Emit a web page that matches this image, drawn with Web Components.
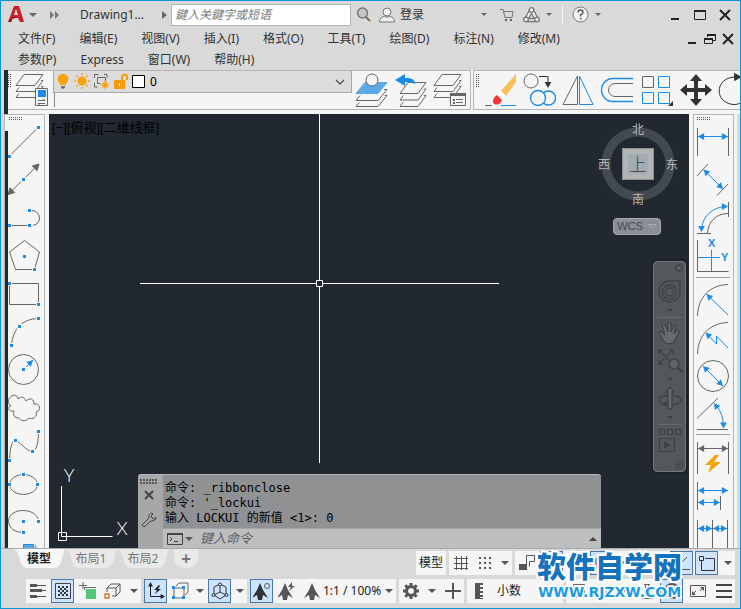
<!DOCTYPE html>
<html lang="zh-CN">
<head>
<meta charset="utf-8">
<title>Drawing1</title>
<style>
  html, body { height: 100%; margin: 0; }
  body {
    font: 12px/16px "Noto Sans", "Noto Sans CJK SC", sans-serif;
    color: #333;
    background: #d9d9d9;
  }
</style>
</head>
<body>
<cad-window></cad-window>

<script>
const G = '#666', B = '#1a8ce8', P = '#f5f5f5';
const sq = (x, y) => `<path fill="${P}" d="M${x-2} ${y-2}h5v5h-5z"/><path fill="${B}" d="M${x-1} ${y-1}h3v3h-3z"/>`;
const ln = (d, c = G, w = 1) => `<path d="${d}" fill="none" stroke="${c}" stroke-width="${w}"/>`;
const head = (x, y, a, c = B, n = 7) => {
  const p = (r, t) => `${(x + r * Math.cos(t)).toFixed(1)},${(y + r * Math.sin(t)).toFixed(1)}`;
  return `<polygon fill="${c}" points="${x},${y} ${p(n, a + Math.PI - .5)} ${p(n, a + Math.PI + .5)}"/>`;
};
const arrow = (x1, y1, x2, y2, c = B, both = true) => {
  const a = Math.atan2(y2 - y1, x2 - x1);
  return ln(`M${x1} ${y1}L${x2} ${y2}`, c) + head(x2, y2, a, c) + (both ? head(x1, y1, a + Math.PI, c) : '');
};
const sheet = (x, y, fill = P, w = 20, s = 9, h = 11) => {
  const pts = `${x+s},${y} ${x+s+w},${y} ${x+w},${y+h} ${x},${y+h}`;
  return `<polygon points="${pts}" fill="${P}" stroke="${P}" stroke-width="4"/><polygon points="${pts}" fill="${fill}" stroke="${fill === P ? G : fill}"/>`;
};
const person = (c) => `<path fill="${c}" d="M9 1l3 7 5 8-5-3-1 5h-4l-1-5-5 3 5-8z"/>`;
const checker = () => {
  let d = '';
  for (let r = 0; r < 5; r++) for (let c = 0; c < 5; c++) if ((r + c) % 2 === 0) d += `M${4 + c * 2} ${4 + r * 2}h2v2h-2z`;
  return `<path fill="#333" d="${d}"/>`;
};

const ICONS = {
  /* draw palette */
  line: [36, 38, ln('M1 33.500L30.500 4') + sq(1, 33) + sq(30, 4)],
  ray: [36, 38, arrow(0, 33.5, 31, 3, G).replaceAll('polygon', 'polygon stroke="#666"') + sq(15, 18)],
  polyline: [36, 38, ln('M1 26.500H21M21 11.500h3a7.500 7.500 0 0 1 0 15H21') + sq(1, 26) + '<path fill="#f5f5f5" d="M23 24h2v5h-2z"/>' + sq(21, 26) + sq(21, 11)],
  polygon: [36, 38, ln('M16.500 3.500L31.500 15 26.500 32.500H7.500L1.500 15z') + sq(16, 19) + sq(26, 32)],
  rect: [36, 38, ln('M1.500 8.500h29v21h-29z') + sq(1, 8) + sq(30, 29)],
  arc: [36, 38, ln('M3.500 32C5 16 14 6 30 5.500') + sq(3, 32) + sq(11, 13) + sq(30, 5)],
  circle: [36, 38, `<circle cx="15.500" cy="18.500" r="15" fill="none" stroke="${G}"/>` + arrow(15, 19, 25, 9, B, false) + sq(15, 18)],
  cloud: [36, 38, ln('M3 17C-1 15 0 8 4 7C7 5 10 7 10 10C13 7 17 8 18 12C22 8 26 10 26 15C32 14 34 21 28 23C30 28 24 31 21 29C17 34 12 31 11 29C6 29 5 26 6 22C0 23-1 17 3 17z')],
  spline: [36, 38, ln('M1.500 33C2 20 4 14 7 13.500C13 15 18 24 24 24.500C29 24 30.500 14 30.500 4') + sq(1, 33) + sq(7, 13) + sq(24, 24) + sq(30, 4)],
  ellipse: [36, 38, `<ellipse cx="15.500" cy="19.500" rx="14" ry="10" fill="none" stroke="${G}"/>` + sq(15, 9) + sq(1, 19) + sq(29, 19)],
  ellarc: [36, 38, ln('M30.500 18C29 4 1 4 .5 18C1 26 7 29 15 29.500') + sq(15, 18) + sq(30, 18) + sq(15, 29)],
  insert: [36, 38, `<path fill="#5aa9e6" stroke="${B}" d="M15.500 3.500h10v12h-10z"/><path fill="#5aa9e6" d="M27 3v12h6z"/>`],
  /* dimension palette */
  dlinear: [36, 38, ln('M1.500 5v28M32.500 5v28') + arrow(2, 13.5, 32, 13.5)],
  daligned: [36, 38, ln('M1 15L12 3M21 34.500L32 23') + arrow(7.5, 8.5, 27, 28)],
  darc: [36, 38, ln('M5.500 31C6 18 16 8 30 7.500', B) + head(5.5, 33, 1.57) + head(32, 7.5, 0) + ln('M11.500 34C12 23 20 14.500 32 14.500M32.500 3v15M1 34.500h14')],
  dord: [36, 38, ln('M1.500 3v31.500h31') + ln('M15.500 13v21M1 20.500h23', B) + `<g font-family="Liberation Sans, sans-serif" font-size="11" font-weight="700" fill="${B}"><text x="12" y="10">X</text><text x="25" y="24">Y</text></g>`],
  dradius: [36, 38, ln('M1.500 36C2 17 14 5 32 4.500') + arrow(32, 35, 10.5, 14, B, false)],
  djog: [36, 38, ln('M1.500 36C2 17 14 5 32 4.500') + ln('M32 30L20.500 18v8L11 16', B) + head(9.5, 14.5, -2.36)],
  ddiam: [36, 38, `<circle cx="17" cy="20" r="15.500" fill="none" stroke="${G}"/>` + arrow(7, 10, 27, 30)],
  dang: [36, 38, ln('M1 24.500L22 4M1 35.500h31') + ln('M20 11Q27 19 27.500 32', B) + head(18, 9, -2.2) + head(27.5, 34.5, 1.57)],
  dquick: [36, 38, ln('M1.500 5v32M32.500 5v32') + arrow(2, 11.500, 32, 11.500, G) + '<path fill="#f5a30a" d="M19 18l-10 10h6l-3 8 13-11h-7l5-7z"/>'],
  dbase: [36, 38, ln('M1.500 7v28M24.500 21v14') + arrow(2, 15.500, 32, 15.500) + arrow(2, 27.500, 24, 27.500)],
  dcont: [36, 38, ln('M1.500 7v28M16.500 7v28M31.500 7v28') + arrow(2, 15.500, 16, 15.500) + arrow(17, 15.500, 31, 15.500)],
  /* standard toolbars */
  layerprops: [37, 37, sheet(3, 14.5, P, 19, 8) + sheet(3, 8.500, P, 19, 8) + sheet(3, 2.500, P, 19, 8) + `<path fill="${P}" stroke="${G}" d="M22.500 16.500h12v17h-12z"/><path fill="${B}" d="M25 18h8v7h-8z"/>` + ln('M25 28.500h7l-2-2M32 31.500h-7l2 2')],
  layeriso: [37, 37, sheet(2, 23.5, P, 22) + sheet(2, 17.5, P, 22) + sheet(2, 10.5, '#5aa9e6', 22) + `<circle cx="18" cy="8" r="6" fill="${P}" stroke="${G}"/>`],
  layerprev: [37, 37, sheet(7, 23.5, P, 18, 8) + sheet(7, 17, P, 18, 8) + sheet(7, 10.5, P, 18, 8) + `<path fill="${B}" d="M2 8l10-6v4q10-1 10 6-3-2-10-2v4z"/>`],
  layerstate: [37, 37, sheet(2, 14.5, P, 19, 8) + sheet(2, 8.5, P, 19, 8) + sheet(2, 2.500, P, 19, 8) + `<path fill="${P}" stroke="${G}" d="M18.500 21.500h15v12h-15z"/><path fill="${G}" d="M18 21h16v3h-16zM21 27h2v2h-2zM21 30h2v2h-2z"/>` + ln('M24 27.500h7M24 30.500h7')],
  erase: [37, 37, `<path fill="#f8bf55" d="M18 19L33 2v8L23 24z"/><path fill="#fff" d="M14 23l4-4 5 5-4 4z"/><path fill="#f03a3a" d="M14 23l5 5q-2 6-8 4-3-5 3-9z"/>` + ln('M2 33.500h7') + ln('M18 33.500h15', B)],
  copy: [37, 37, `<g fill="none" stroke="${G}"><circle cx="9" cy="9" r="7"/></g><g fill="none" stroke="${B}" stroke-width="1.400"><circle cx="26.500" cy="26" r="7"/><circle fill="${P}" cx="16" cy="26" r="7.500"/></g>` + ln('M17 4.500h9v8', '#333') + head(26, 16, 1.57, '#333', 7)],
  mirror: [37, 37, ln('M16.500 4v28.500H2z') + ln('M18.500 4v28.500H32z', B)],
  offset: [37, 37, ln('M33 6.500H13a11 11 0 0 0 0 23H33', B, 1.4) + ln('M33 11.500H15a6 6 0 0 0 0 13H33')],
  array: [37, 37, ln('M3.500 4.500h11v11h-11z') + ln('M19.500 4.500h11v11h-11zM3.500 20.500h11v11h-11zM19.500 20.500h11v11h-11z', B) + '<path fill="#333" d="M34 29v5h-5z"/>'],
  move: [37, 37, '<path fill="#333" d="M18 2l6 7h-4v7h7v-4l7 6-7 6v-4h-7v7h4l-6 7-6-7h4v-7H9v4l-7-6 7-6v4h7V9h-4z"/>'],
  rotate: [37, 37, ln('M20 5C-2 4-4 30 16 32.500C24 33 30 28 31 18', '#333') + head(25, 5, 0, '#333', 9)],
  /* layer list */
  bulb: [16, 18, '<circle cx="8" cy="6" r="5.300" fill="#fba20b"/><path fill="#fba20b" d="M5 8h6v4H5z"/><path fill="#777" d="M6 13h4v2l-2 1-2-1z"/>'],
  sun: [16, 18, '<circle cx="8" cy="8" r="4.500" fill="#fba20b"/><g stroke="#fba20b" stroke-width="1.500"><path d="M8 0v2M8 14v2M0 8h2M14 8h2M2.500 2.500L4 4M12 12l1.500 1.500M2.500 13.500L4 12M12 4l1.500-1.500"/></g>'],
  vpfreeze: [17, 18, ln('M1.500 5v-3.500h4M11 1.500h3v3M1.500 10v4h3M4.500 4.500h8v4M4.500 4.500v6h3') + '<circle cx="12" cy="12" r="2.600" fill="#fba20b"/><path stroke="#fba20b" d="M12 7.500v9M7.500 12h9M9 9l6 6M15 9l-6 6"/>'],
  unlock: [16, 18, '<path fill="#f59c0b" d="M1 7h11v9H1z"/><path fill="none" stroke="#f59c0b" stroke-width="2" d="M9 8V4q0-2.500 2.500-2.500T14 4v3"/><path fill="#fff" d="M6 10h1v3H6z"/>'],
  swatch: [14, 18, '<path fill="#fff" stroke="#000" d="M.5 2.500h12v12h-12z"/>'],
  chev: [10, 8, ln('M1 2l4 4 4-4', '#555', 1.4)],
  /* title bar */
  logo: [16, 17, '<path fill="#c8202b" d="M6 0h5l5 16h-4l-2-4H5l-2 4H0z"/><path fill="#f7dcdc" d="M8 3l2 6H6z"/><path fill="#861018" d="M0 16l5-5h5L4 13l-1 3z"/>'],
  caret: [8, 6, '<path fill="#666" d="M0 1h8L4 5z"/>'],
  caretsm: [8, 6, '<path fill="#666" d="M1 1h6L4 4z"/>'],
  caretlg: [8, 6, '<path fill="#555" d="M0 1h8L4 5z"/>'],
  play: [5, 8, '<path fill="#666" d="M0 0v8l5-4z"/>'],
  play2: [10, 8, '<path fill="#777" d="M0 0v8l4-4zM5 0v8l4-4z"/>'],
  find: [16, 16, '<circle cx="6.500" cy="6" r="5" fill="#c6c6c6" stroke="#777" stroke-width="1.500"/><path d="M10 10l4 4" stroke="#8a6a45" stroke-width="2"/>'],
  user: [17, 16, '<g fill="#eee" stroke="#777"><circle cx="8" cy="5" r="4"/><path d="M.5 15q0-5 5-5.500 2.500 1.500 5 0 5 .5 5 5.500z"/></g>'],
  cart: [14, 14, ln('M0 1.500h3l2 8h7l1-6H4', '#777') + '<circle cx="6" cy="12" r="1.200" fill="#666"/><circle cx="11" cy="12" r="1.200" fill="#666"/>'],
  share: [17, 16, '<g fill="#f0f0f0" stroke="#777" stroke-width="1.300"><path d="M6 4L2 11.500 4.500 14.500h8L15 11.500 11 4z"/><path fill="#d9d9d9" d="M8.500 6.500l3 5h-6z"/><circle cx="8.500" cy="3" r="2.300"/><circle cx="3" cy="12.500" r="2.300"/><circle cx="14" cy="12.500" r="2.300"/></g>'],
  help: [17, 17, '<circle cx="8.500" cy="8.500" r="7.500" fill="#f2f2f2" stroke="#777"/><path d="M6 6.500q0-2.500 2.500-2.500T11 6.500Q11 8 8.500 9v1.500" fill="none" stroke="#555" stroke-width="1.400"/><path fill="#555" d="M8 12h1.500v1.500H8z"/>'],
  wmin: [12, 12, '<path fill="#222" d="M2 9h8v2H2z"/>'],
  wmax: [12, 12, '<path fill="none" stroke="#222" d="M.5 1.500h11v9H.5z"/><path fill="#222" d="M0 1h12v2H0z"/>'],
  wrest: [12, 12, '<path fill="none" stroke="#222" d="M3.500 4V1.500h8v6H9M.5 5.500h8v5H.5z"/><path fill="#222" d="M3 1h9v2H3zM0 5h9v2H0z"/>'],
  wclose: [12, 12, ln('M1 1l10 10M11 1L1 11', '#222', 2)],
  /* status bar */
  st_lines: [18, 18, '<path fill="#555" d="M1 2h7v3H1zM8 3h9v1H8zM1 7h12v3H1zM12 8h5v1h-5zM1 13h7v3H1zM8 14h9v1H8z"/>'],
  st_check: [18, 18, ln('M1.500 1.500h15v15h-15z', '#444') + checker().replace('<path', '<path transform="translate(0 0)"')],
  st_plusgreen: [18, 18, ln('M4 0v7M0 3.500h8M5.500 8V5.500H17') + '<path fill="#52c77c" d="M7 7h10v10H7z"/>'],
  st_iso: [18, 18, ln('M3 10V6l4-4h9v8l-4 4H8M3 6h9v8M12 6l4-4', '#555') + '<path fill="none" stroke="#e06c2c" stroke-width="1.300" d="M1 12h4v4H1z"/>'],
  st_ucs: [18, 18, ln('M3.500 2v12.500H16', '#222') + head(3.500, 0, -1.57, '#222', 5) + head(18, 14.5, 0, '#222', 5) + '<path fill="#222" d="M12 3L7 8h3l-2 4 6-5h-3l2-3z"/>'],
  st_cube: [18, 18, ln('M3 6h10v10H3zM5 4l3-3h9v9l-3 3', G) + [[1, 4], [11, 4], [1, 14], [11, 14]].map(([x, y]) => `<path fill="${B}" d="M${x} ${y}h3v3h-3z"/>`).join('')],
  st_isoaxis: [18, 18, ln('M9 2L3 5v8l6 4 6-4V5zM9 4v6M9 10l-6 3M9 10l6 3', '#333') + '<g fill="#cce4ff" stroke="#333"><circle cx="9" cy="2.500" r="1.500"/><circle cx="2.500" cy="13" r="1.500"/><circle cx="15.500" cy="13" r="1.500"/></g>'],
  st_anno1: [18, 18, person('#333').replace('<path', '<path transform="translate(-2 0)"') + '<circle cx="14" cy="4" r="2.500" fill="none" stroke="#555"/>'],
  st_anno2: [18, 18, person('#555').replace('<path', '<path transform="translate(-2 0)"') + '<path fill="#555" d="M14 0l-4 5h3l-2 4 6-5h-3z"/>'],
  st_anno3: [18, 18, person('#555')],
  st_gear: [18, 18, '<circle cx="9" cy="9" r="4.500" fill="none" stroke="#555" stroke-width="3"/><g stroke="#555" stroke-width="3"><path d="M9 1v3M9 14v3M1 9h3M14 9h3M3.300 3.300l2 2M12.700 12.700l2 2M3.300 14.700l2-2M12.700 5.300l2-2"/></g>'],
  st_plus: [18, 18, ln('M9 1v16M1 9h16', '#555', 2)],
  st_ruler: [10, 18, '<path fill="#555" d="M1 1h8v2H6v2h3v2H6v2h3v2H6v2h3v2H6v1h3v1H1z"/>'],
  st_note: [18, 18, ln('M3.500 2.500h11v13h-11zM6 6.500h2M10 6.500h3M6 10.500h2M10 10.500h3')],
  st_lock: [18, 18, ln('M2 6.500h12') + '<path fill="#555" d="M9 10h7v6H9z"/><path fill="none" stroke="#555" d="M10.500 10V8q2-2 4 0v2"/>'],
  st_flask: [18, 18, ln('M7.500 3v5l-4 8.500h11l-4-8.500V3M6 2.500h6')],
  st_disc: [18, 18, '<circle cx="9" cy="9" r="7" fill="none" stroke="#555" stroke-width="2"/><circle cx="9" cy="9" r="3" fill="#777"/>'],
  st_full: [18, 18, ln('M1.500 3.500h15v11h-15z', '#555') + '<path fill="#555" d="M11 5h4v4zM3 9v4h4z"/>' + ln('M4 12l3-3M14 6l-3 3', '#555')],
  st_menu: [18, 18, '<path fill="#444" d="M1 2h16v2H1zM1 8h16v2H1zM1 14h16v2H1z"/>'],
  st_grid: [18, 18, ln('M2 4.500h14M2 9.500h14M2 14.500h14M4.500 2v14M9.500 2v14M14.500 2v14', '#555')],
  st_dots: [18, 18, '<path fill="#555" d="' + [3, 8, 13].flatMap(x => [3, 8, 13].map(y => `M${x} ${y}h2v2h-2z`)).join('') + '"/>'],
  st_flag: [18, 18, '<path fill="#555" d="M1 10h8v6H1z"/>' + ln('M8.500 10V1.500h8v6h-5v5', '#555')],
  st_ortho: [18, 18, ln('M3.500 2v13.500H17', '#555')],
  st_polar: [18, 18, ln('M2 15.500h15M2 15L14 3', '#555')],
  st_osnap: [18, 18, ln('M3.500 7v9.500h13v-12H7', '#333') + ln('M1.500 2.500h4v4h-4z', '#333')],
  /* command line */
  cx: [10, 10, ln('M1 1l8 8M9 1L1 9', '#444', 2)],
  wrench: [16, 16, ln('M1 13L8 6Q7 2 11 1l1 1-2 2 1 2 2 1 2-2Q15 9 10 9L3 15z', '#444')],
  prompt: [17, 12, ln('M.5 .5h15v11H.5z', '#444') + '<path fill="#444" d="M0 0h16v2H0z"/>' + ln('M3 4l2 2-2 2M7 8.500h4', '#444')],
  up: [8, 6, '<path fill="#444" d="M0 5h8L4 1z"/>'],
  /* navigation bar */
  n_close: [10, 10, '<circle cx="5" cy="5" r="4" fill="#44484c"/><path stroke="#6d7174" d="M3 3l4 4M7 3L3 7"/>'],
  n_wheel: [26, 26, '<g fill="none" stroke="#3e4246" stroke-width="1.300"><path d="M13 2h10v11A10.500 10.500 0 1 1 13 2z"/><circle cx="12.500" cy="13" r="7"/><circle cx="12.500" cy="13" r="4"/></g>'],
  n_hand: [26, 26, '<path fill="#686c70" stroke="#3e4246" stroke-width="1.200" d="M8 23L2 13q0-2 3-1l3 3L5 5q1-2 3 0l3 7V3q1-2 3 0v9l3-7q2-1 2 1l-2 8 3-4q3-1 2 2l-4 8q-2 5-10 3z"/>'],
  n_zoom: [26, 26, '<g fill="none" stroke="#3e4246" stroke-width="1.400"><path d="M2 2l14 14M16 2L2 16M2 6V2h4M12 2h4v4M2 12v4h4"/><circle cx="17" cy="16" r="5" fill="#5f6367"/><path stroke-width="2.500" d="M21 20l4 4"/></g>'],
  n_orbit: [26, 26, '<g fill="none" stroke="#3e4246" stroke-width="1.300"><ellipse cx="13" cy="14" rx="11" ry="5"/><path fill="#686c70" d="M11 23V6H9l4-5 4 5h-2v17z"/></g><path fill="#3e4246" d="M4 18l6-3v6z"/>'],
  n_motion: [26, 26, '<g fill="none" stroke="#3e4246" stroke-width="1.200"><path d="M2.500 2.500h5v5h-5zM10.500 2.500h5v5h-5zM18.500 2.500h5v5h-5zM2.500 11.500h15v13h-15z"/></g><path fill="#3e4246" d="M7 14v8l7-4z"/>'],
  n_caret: [8, 6, '<path fill="#3e4246" d="M1 1h6L4 4z"/>'],
  n_min: [10, 10, '<circle cx="5" cy="5" r="4" fill="none" stroke="#3e4246"/><path stroke="#3e4246" d="M3 4h4M3 6h4"/>'],
};

/* Base class: opens a shadow root and fills it with the styles and markup of the subclass. */
class Base extends HTMLElement {
  connectedCallback() {
    if (this.shadowRoot) return;
    const t = document.createElement('template');
    t.innerHTML = `<style>*{box-sizing:border-box}button{font:inherit;color:inherit;border:0;padding:0;margin:0;background:none;display:flex;align-items:center;justify-content:center}${this.css()}</style>${this.html()}`;
    this.attachShadow({ mode: 'open' }).append(t.content.cloneNode(true));
  }
  css() { return ':host{display:block}'; }
  html() { return '<slot></slot>'; }
}
const define = (name, css, html) => customElements.define(name, class extends Base {
  css() { return css; }
  html() { return typeof html === 'function' ? html(this) : html; }
});

define('ui-icon', ':host{display:inline-flex;flex:none}svg{display:block}', (el) => {
  const [w, h, body] = ICONS[el.getAttribute('name')];
  return `<svg width="${w}" height="${h}" viewBox="0 0 ${w} ${h}" aria-hidden="true">${body}</svg>`;
});

/* Button with an icon and an optional slotted text. */
define('tool-button', `
  :host{display:flex;flex:none}
  button{width:100%;height:100%;gap:4px;white-space:nowrap}`,
  (el) => `<button type="button" aria-label="${el.getAttribute('label') || el.textContent}">${el.hasAttribute('icon') ? `<ui-icon name="${el.getAttribute('icon')}"></ui-icon>` : ''}<slot></slot></button>`);

const tb = (icon, label, cls = '') => `<tool-button class="${cls}" icon="${icon}" label="${label}"></tool-button>`;

/* Two crossed stripe layers leave a field of single dots. */
const DOTS = 'linear-gradient(90deg,#0000 1px,#f5f5f5 1px) 0 0/2px 2px,linear-gradient(#555 1px,#f5f5f5 1px) 0 0/2px 2px';

define('title-bar', `
  :host{display:flex;align-items:center;height:27px;padding:0 3px 0 7px}
  .l,.r,.w{display:flex;align-items:center}
  .name{margin:0 18px 0 20px}
  .c1{margin:0 13px 0 5px}
  input{width:180px;height:22px;margin-left:4px;border:1px solid #b4b4b4;background:#fff;padding:0 3px;font:inherit;color:#333;outline:0}
  input::placeholder{color:#777;font-style:italic;opacity:1}
  .find{margin:0 7px 0 5px}
  .login{margin-left:4px}
  .r{margin-left:auto;gap:9px;margin-right:60px}
  .wide{margin-right:3px}.tight{margin-left:-4px}
  .bar{width:1px;height:18px;background:#f5f5f5}
  .w tool-button{width:25px;height:24px}`, `
  <div class="l">${tb('logo', '应用程序菜单')}${tb('caret', '快速访问', 'c1')}${tb('play2', '展开')}
    <span class="name">Drawing1...</span>${tb('play', '展开搜索')}
    <input type="text" aria-label="搜索" placeholder="鍵入关鍵字或短语">
    ${tb('find', '查找', 'find')}${tb('user', '用户')}<tool-button class="login" label="登录">登录</tool-button></div>
  <div class="r">${tb('caretsm', '登录选项', 'wide')}${tb('cart', '应用商店')}${tb('share', '保持连接')}${tb('caretsm', '连接选项', 'tight')}<span class="bar"></span>${tb('help', '帮助')}${tb('caretsm', '帮助选项', 'tight')}</div>
  <div class="w">${tb('wmin', '最小化')}${tb('wmax', '最大化')}${tb('wclose', '关闭')}</div>`);

define('menu-bar', `
  :host{display:flex;padding:0 3px 0 17px}
  nav{flex:1;display:flex;flex-wrap:wrap;column-gap:24px}
  nav tool-button{height:21px}
  .w{display:flex;height:21px;flex:none;width:120px;justify-content:flex-end}
  .w tool-button{width:18px}`, `
  <nav>${['文件(F)', '编辑(E)', '视图(V)', '插入(I)', '格式(O)', '工具(T)', '绘图(D)', '标注(N)', '修改(M)', '参数(P)', 'Express', '窗口(W)', '帮助(H)'].map(t => `<tool-button>${t}</tool-button>`).join('')}</nav>
  <div class="w">${tb('wmin', '最小化图形')}${tb('wrest', '还原图形')}${tb('wclose', '关闭图形')}</div>`);

define('layer-combo', `
  :host{display:block;align-self:stretch}
  .box{display:flex;align-items:center;height:22px;background:#dcdcdc;border:1px solid #a8a8a8;border-top:0;padding:0 6px 0 1px}
  .rail{width:1px;height:14px;margin:0 0 0 1px;background:#888}
  .icons{display:flex;gap:3px;align-items:center}
  select{flex:1;min-width:0;appearance:none;border:0;background:none;font:inherit;color:#000;padding:0 4px;outline:0}`, `
  <div class="box"><span class="icons">${['bulb', 'sun', 'vpfreeze', 'unlock', 'swatch'].map(n => `<ui-icon name="${n}"></ui-icon>`).join('')}</span>
  <select aria-label="图层"><option>0</option></select><ui-icon name="chev"></ui-icon></div><div class="rail"></div>`);

define('tool-strip', `
  :host{display:flex;height:44px;padding-left:3px;background:linear-gradient(90deg,#d9d9d9 3px,#212830 3px,#212830 7px,#f5f5f5 7px)}
  .set{display:flex;height:40px;margin-left:4px;border:1px solid #b4b4b4;border-left:0;background:#f5f5f5;flex:none}
  .set+.set{margin-left:2px;border-left:1px solid #b4b4b4;border-right:0;flex:1;min-width:0;overflow:hidden}
  .grip{flex:none;width:3px;height:14px;margin:3px 1px 0 0;background:${DOTS}}
  .set+.set .grip{margin:3px 3px 0 2px}
  .set>tool-button{width:39px;height:38px}
  layer-combo{width:299px;margin:0 1px 0 2px}`, `
  <div class="set"><span class="grip"></span>${tb('layerprops', '图层特性')}<layer-combo></layer-combo>${tb('layeriso', '置为当前')}${tb('layerprev', '上一个图层')}${tb('layerstate', '图层状态')}</div>
  <div class="set"><span class="grip"></span>${['erase:删除', 'copy:复制', 'mirror:镜像', 'offset:偏移', 'array:阵列', 'move:移动', 'rotate:旋转'].map(s => tb(...s.split(':'))).join('')}</div>`);

/* Vertical docked palette of 38px tools; "|" makes a separator. */
define('tool-palette', `
  :host{display:block;flex:none;width:41px;border:1px solid #b4b4b4;border-bottom:0;background:#f5f5f5;overflow:hidden;height:100%;padding-left:var(--pad,2px)}
  :host([dark]){--pad:3px;background:linear-gradient(#f5f5f5,#f5f5f5) 3px 0 no-repeat,linear-gradient(#f5f5f5 16px,#212830 16px)}
  .grip{height:8px;padding:2px 0 0 1px}
  .grip i{display:block;width:13px;height:3px;background:${DOTS}}
  tool-button{width:36px;height:38px}
  hr{border:0;height:5px;margin:0;background:linear-gradient(#999,#999) 0 2px/34px 1px no-repeat}`,
  (el) => `<div class="grip"><i></i></div>${el.getAttribute('tools').split(' ').map(n => n === '|' ? '<hr>' : tb(n, n)).join('')}`);

define('view-cube', `
  :host{display:grid;width:84px;height:88px;grid:18px 1fr 18px/16px 1fr 16px;place-items:center;color:#b5b6b8;font:12px/18px "Noto Sans CJK SC",sans-serif;background:radial-gradient(circle at 42px 44px,#0000 27px,#434950 28px 36px,#0000 37px)}
  .n,.s{grid-column:2}.n{grid-row:1}.s{grid-row:3}.w,.m,.e{grid-row:2}
  .m{width:32px;height:32px;padding:5px;background:linear-gradient(#a2adb3,#a2adb3) content-box,#b2b3b5;border:1px solid #8b8e91;color:#333b42;font-family:"Noto Sans CJK SC",sans-serif;font-size:17px;font-weight:300;line-height:20px}`, `
  <span class="n">北</span><span class="w">西</span><button class="m" type="button">上</button><span class="e">东</span><span class="s">南</span>`);

define('nav-bar', `
  :host{display:flex;flex-direction:column;align-items:center;width:33px;background:#54585c;border:1px solid #74787b;border-radius:4px;box-shadow:0 0 0 2px #1b2127;padding-bottom:1px}
  .x{align-self:flex-end;height:11px;margin-right:1px}
  .b{height:28px;width:30px}.c{height:10px;width:30px}
  .sp{height:5px}
  hr{width:26px;margin:1px 0;border:0;border-top:1px solid #66696d}`, `
  ${tb('n_close', '关闭导航栏', 'x')}<span class="sp"></span>${tb('n_wheel', '控制盘', 'b')}${tb('n_caret', '控制盘选项', 'c')}<hr>${tb('n_hand', '平移', 'b')}${tb('n_zoom', '缩放', 'b')}${tb('n_caret', '缩放选项', 'c')}${tb('n_orbit', '动态观察', 'b')}${tb('n_caret', '观察选项', 'c')}<hr>${tb('n_motion', 'ShowMotion', 'b')}<span class="sp"></span>${tb('n_min', '自定义', 'x')}`);

define('command-line', `
  :host{display:flex;width:463px;background:#a6a7a9;border-top:1px solid #b4b6b8;border-radius:3px 3px 0 0;overflow:hidden}
  .side{width:25px;flex:none;display:flex;flex-direction:column;align-items:center;padding:4px 3px 0 0}
  .side i{width:18px;height:5px;background:linear-gradient(90deg,#0000 2px,#a6a7a9 2px) 0 0/3px 3px,linear-gradient(#555 2px,#0000 2px) 0 0/3px 3px}
  .side .x{margin:6px 0 12px}
  .main{flex:1;min-width:0}
  .log{background:#8f9193;color:#000;font:12px/15px "DejaVu Sans Mono","Noto Sans CJK SC",monospace;height:53px;padding:6px 2px 2px}
  .log div{white-space:pre;height:15px}
  .in{display:flex;align-items:center;height:20px;background:#bdbec0;border-top:1px solid #a2a3a5;padding:0 4px;gap:1px}
  input{flex:1;min-width:0;border:0;background:none;outline:0;font:13px/16px "DejaVu Sans Mono","Noto Sans CJK SC",monospace;color:#000;padding:0 6px}
  input::placeholder{color:#5d5e60;font-style:italic;opacity:1}`, `
  <div class="side"><i></i>${tb('cx', '关闭', 'x')}${tb('wrench', '自定义')}</div>
  <div class="main"><div class="log"><div>命令: _ribbonclose</div><div>命令: '_lockui</div><div>输入 LOCKUI 的新值 &lt;1&gt;: 0</div></div>
  <div class="in">${tb('prompt', '最近使用的命令')}${tb('caretlg', '命令列表')}<input type="text" aria-label="命令" placeholder="键入命令">${tb('up', '历史记录')}</div></div>`);

define('drawing-area', `
  :host{display:block;position:relative;flex:1;min-width:0;height:100%;background:#212830;overflow:hidden}
  :host>*{position:absolute}
  .cross{left:91px;top:0;position:absolute}
  .label{position:absolute;left:3px;top:5px;color:#000;font:13px/18px "Liberation Sans","Noto Sans CJK SC",sans-serif;white-space:nowrap}
  .ucs{position:absolute;left:0;bottom:0}
  view-cube{position:absolute;right:9px;top:6px}
  .wcs{position:absolute;right:28px;top:104px;width:48px;height:17px;border:1px solid #a5a8b2;border-radius:4px;background:#8b8e99;color:#454a54;font:11px/15px "Liberation Sans",sans-serif;gap:5px}
  nav-bar{position:absolute;right:3px;top:147px}
  command-line{position:absolute;left:89px;bottom:0}`, `
  <svg class="cross" width="359" height="349" viewBox="0 0 359 349" aria-hidden="true"><path d="M0 169.500h176M183 169.500h176M179.500 0v166M179.500 173v176M176.500 166.500h6v6h-6z" fill="none" stroke="#fff"/></svg>
  <span class="label">[−][俯视][二维线框]</span>
  <svg class="ucs" width="90" height="86" viewBox="0 0 90 86"><path d="M12.500 24v50.500h51M9.500 70.500h8v8h-8z" fill="none" stroke="#fff"/><g fill="#fff" font-family="Lato, sans-serif" font-size="18" font-weight="300" text-anchor="middle"><text x="20" y="20">Y</text><text x="73" y="73">X</text></g></svg>
  <view-cube></view-cube>
  <button class="wcs" type="button">WCS <svg width="9" height="6"><path d="M.5 .5h8l-4 4z" fill="none" stroke="#a9acb5"/></svg></button>
  <nav-bar></nav-bar><command-line></command-line>`);

define('layout-tabs', `
  :host{display:flex;height:19px;align-self:flex-start;padding-left:11px}
  button{height:19px;width:54px;background:#e9e9e9;color:#777;clip-path:path("M0 0Q5 0 7 8Q9 19 15 19H42Q48 19 50 10Q52 0 54 0z");margin-right:-2px}
  button[aria-selected=true]{background:#f7f7f7;color:#222;font-weight:700}
  .add{font-size:17px;font-weight:700;clip-path:none;border-radius:0 0 10px 10px;margin-left:6px;width:24px}`, `
  <button type="button" role="tab" aria-selected="true">模型</button><button type="button" role="tab">布局1</button><button type="button" role="tab">布局2</button><button class="add" type="button" aria-label="新建布局">+</button>`);

define('status-group', `:host{display:flex;height:24px;gap:2px;background:#f5f5f5;flex:none;align-items:center}:host([dense]){gap:1px}`, '<slot></slot>');

define('status-bar', `
  :host{display:block;padding-right:5px;border-top:1px solid #a9a9a9;padding-bottom:5px;color:#222}
  .row{display:flex;gap:3px;align-items:center}
  .row+.row{margin-top:4px;justify-content:flex-end}
  .one{padding-top:2px;margin-left:auto;display:flex;gap:3px}
  tool-button{height:24px}
  .n{width:23px}.c{width:15px}.cn{width:13px}.cw{width:35px}.d{width:25px}
  .s{width:23px;background:#cce4ff;border:1px solid #4a78a8}
  .m{width:30px}.scale{width:54px}.dec{width:34px}`, `
  <div class="row"><layout-tabs></layout-tabs><div class="one">
    <status-group><tool-button class="m">模型</tool-button></status-group>
    <status-group dense>${tb('st_grid', '栅格', 'n')}${tb('st_dots', '捕捉模式', 'n')}${tb('caretlg', '捕捉选项', 'c')}</status-group>
    <status-group>${tb('st_flag', '动态输入', 'n')}${tb('st_ortho', '正交', 's')}${tb('st_polar', '极轴', 'n')}${tb('st_isoaxis', '等轴测', 's')}${tb('caretlg', '极轴选项', 'cn')}${tb('st_ortho', '追踪', 'n')}${tb('caretlg', '等轴测选项', 'cn')}${tb('st_polar', '对象捕捉追踪', 's')}${tb('st_osnap', '对象捕捉', 's')}${tb('caretlg', '捕捉设置', 'c')}</status-group>
  </div></div>
  <div class="row">
    <status-group>${tb('st_lines', '线宽', 'n')}${tb('st_check', '透明度', 's')}${tb('st_plusgreen', '选择循环', 'n')}${tb('st_iso', '三维对象捕捉', 'n')}${tb('caretlg', '三维选项', 'c')}</status-group>
    <status-group dense>${tb('st_ucs', '动态 UCS', 's')}${tb('st_cube', '选择过滤', 'n')}${tb('caretlg', '过滤选项', 'c')}${tb('st_isoaxis', '小控件', 's')}${tb('caretlg', '小控件选项', 'c')}</status-group>
    <status-group>${tb('st_anno1', '注释可见性', 's')}${tb('st_anno2', '自动缩放', 'n')}${tb('st_anno3', '注释比例', 'n')}<tool-button class="scale">1:1 / 100%</tool-button>${tb('caretlg', '比例列表', 'c')}</status-group>
    <status-group>${tb('st_gear', '切换工作空间', 'n')}${tb('caretlg', '工作空间', 'c')}${tb('st_plus', '注释监视器', 'n')}</status-group>
    <status-group>${tb('st_ruler', '单位', 'n')}<tool-button class="dec">小数</tool-button>${tb('caretlg', '单位列表', 'cw')}</status-group>
    <status-group>${tb('st_note', '快捷特性', 'd')}${tb('st_lock', '锁定用户界面', 'n')}${tb('caretlg', '锁定选项', 'c')}${tb('st_flask', '隔离对象', 'n')}${tb('st_disc', '硬件加速', 's')}${tb('st_full', '全屏显示', 'd')}${tb('st_menu', '自定义', 'n')}</status-group>
  </div>`);

define('site-mark', `
  :host{display:block;position:absolute;right:58px;bottom:9px;text-align:center;color:#1573be;pointer-events:none;white-space:nowrap}
  b{display:block;font:900 29px/34px "Liberation Sans","Noto Sans CJK SC",sans-serif;-webkit-text-stroke:4px #fff;paint-order:stroke fill}
  span{display:block;font:700 14px/14px "DejaVu Sans",sans-serif;color:#1b9be0;-webkit-text-stroke:3px #fff;paint-order:stroke fill}`, `<b>软件自学网</b><span>WWW.RJZXW.COM</span>`);

define('cad-window', `
  :host{display:grid;grid-template-columns:minmax(0,1fr);grid-template-rows:auto auto auto minmax(0,1fr) auto;height:100vh;box-sizing:border-box;border:1px solid #0a96d6;background:#d9d9d9;overflow:hidden;position:relative}
  main{display:flex;gap:4px;padding:0 3px;min-height:0;background:linear-gradient(#f5f5f5,#f5f5f5) 3px 0/calc(100% - 6px) 100% no-repeat}
  tool-palette:last-child{margin-right:3px}`, `
  <title-bar></title-bar><menu-bar></menu-bar><tool-strip></tool-strip>
  <main><tool-palette dark tools="line ray polyline polygon rect arc circle cloud spline ellipse ellarc insert"></tool-palette>
  <drawing-area></drawing-area>
  <tool-palette tools="dlinear daligned darc dord | dradius djog ddiam dang | dquick dbase dcont"></tool-palette></main>
  <status-bar></status-bar><site-mark></site-mark>`);
</script>
</body>
</html>
